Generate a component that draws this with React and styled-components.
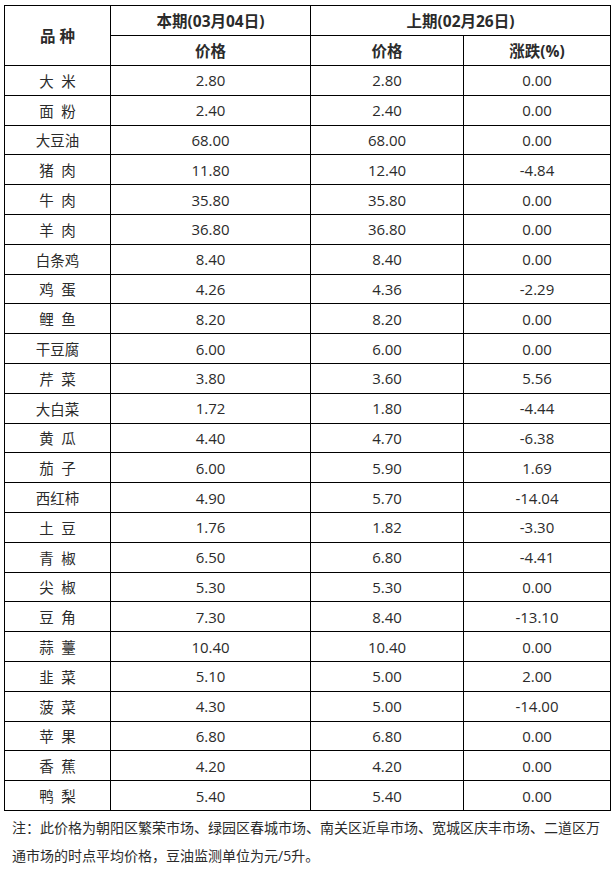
import React from "react";
import styled, { createGlobalStyle } from "styled-components";

const GlobalStyle = createGlobalStyle`
  body {
    margin: 0;
    background: #fff;
    font-family: "Open Sans", "Noto Sans CJK SC", sans-serif;
    color: #333;
  }
`;

const Page = styled.div`
  padding: 5px 4px 0 4px;
`;

const Table = styled.table`
  border-collapse: collapse;
  table-layout: fixed;
  width: 606px;
`;

const HeadCell = styled.th`
  border: 1px solid #000;
  height: 29px;
  padding: 0;
  font-size: 15.5px;
  font-weight: 700;
  text-align: center;
  vertical-align: middle;
  color: #2b2b2b;
`;

const Cell = styled.td`
  border: 1px solid #000;
  height: 28.8px;
  padding: 0;
  font-size: ${(p) => (p.$name ? "14.5px" : "15px")};
  text-align: center;
  vertical-align: middle;
  color: #2b2b2b;
  white-space: pre;
`;

const Note = styled.p`
  margin: 3px 0 0 0;
  padding: 0 0 0 8px;
  font-size: 14px;
  line-height: 28px;
  color: #2b2b2b;
`;

const rows = [
  ["大  米", "2.80", "2.80", "0.00"],
  ["面  粉", "2.40", "2.40", "0.00"],
  ["大豆油", "68.00", "68.00", "0.00"],
  ["猪  肉", "11.80", "12.40", "-4.84"],
  ["牛  肉", "35.80", "35.80", "0.00"],
  ["羊  肉", "36.80", "36.80", "0.00"],
  ["白条鸡", "8.40", "8.40", "0.00"],
  ["鸡  蛋", "4.26", "4.36", "-2.29"],
  ["鲤  鱼", "8.20", "8.20", "0.00"],
  ["干豆腐", "6.00", "6.00", "0.00"],
  ["芹  菜", "3.80", "3.60", "5.56"],
  ["大白菜", "1.72", "1.80", "-4.44"],
  ["黄  瓜", "4.40", "4.70", "-6.38"],
  ["茄  子", "6.00", "5.90", "1.69"],
  ["西红柿", "4.90", "5.70", "-14.04"],
  ["土  豆", "1.76", "1.82", "-3.30"],
  ["青  椒", "6.50", "6.80", "-4.41"],
  ["尖  椒", "5.30", "5.30", "0.00"],
  ["豆  角", "7.30", "8.40", "-13.10"],
  ["蒜  薹", "10.40", "10.40", "0.00"],
  ["韭  菜", "5.10", "5.00", "2.00"],
  ["菠  菜", "4.30", "5.00", "-14.00"],
  ["苹  果", "6.80", "6.80", "0.00"],
  ["香  蕉", "4.20", "4.20", "0.00"],
  ["鸭  梨", "5.40", "5.40", "0.00"],
];

export default function App() {
  return (
    <Page>
      <GlobalStyle />
      <Table>
        <colgroup>
          <col style={{ width: 106 }} />
          <col style={{ width: 200 }} />
          <col style={{ width: 153 }} />
          <col style={{ width: 147 }} />
        </colgroup>
        <thead>
          <tr>
            <HeadCell rowSpan={2}>品 种</HeadCell>
            <HeadCell>本期(03月04日)</HeadCell>
            <HeadCell colSpan={2}>上期(02月26日)</HeadCell>
          </tr>
          <tr>
            <HeadCell>价格</HeadCell>
            <HeadCell>价格</HeadCell>
            <HeadCell>涨跌(%)</HeadCell>
          </tr>
        </thead>
        <tbody>
          {rows.map((r) => (
            <tr key={r[0]}>
              <Cell $name>{r[0]}</Cell>
              <Cell>{r[1]}</Cell>
              <Cell>{r[2]}</Cell>
              <Cell>{r[3]}</Cell>
            </tr>
          ))}
        </tbody>
      </Table>
      <Note>
        注：此价格为朝阳区繁荣市场、绿园区春城市场、南关区近阜市场、宽城区庆丰市场、二道区万通市场的时点平均价格，豆油监测单位为元/5升。
      </Note>
    </Page>
  );
}
